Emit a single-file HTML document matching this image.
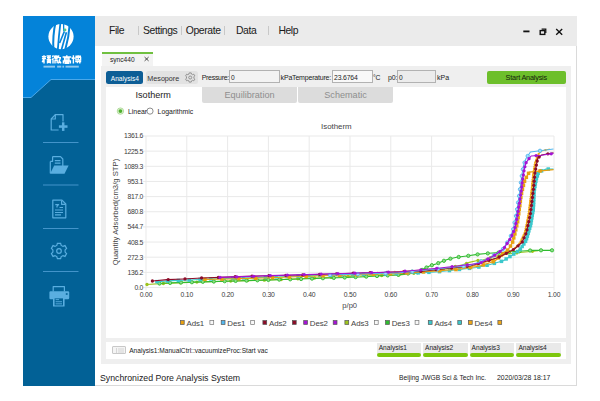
<!DOCTYPE html>
<html><head><meta charset="utf-8">
<style>
*{margin:0;padding:0;box-sizing:border-box}
html,body{width:600px;height:401px;background:#fff;overflow:hidden;font-family:"Liberation Sans",sans-serif;color:#222}
.a{position:absolute}
.menu{font-size:10.4px;letter-spacing:-0.4px;color:#1a1a1a;top:25.3px;line-height:12px}
.msep{position:absolute;width:1px;background:#c8c8c8;top:26px;height:9px}
.t7{font-size:6.4px;line-height:8px;white-space:nowrap}
.yl{position:absolute;left:110px;width:33px;text-align:right;font-size:6.8px;letter-spacing:-0.3px;line-height:9px;color:#3a3a3a}
.xl{position:absolute;top:290.3px;width:30px;text-align:center;font-size:6.8px;letter-spacing:-0.2px;line-height:9px;color:#3a3a3a}
.lm{position:absolute;top:320.3px;width:4.4px;height:4.4px;border:0.6px solid #666}
.lm.h{background:#f4f4f4;border-color:#888}
.lt{position:absolute;top:318.6px;font-size:7.9px;line-height:9px;color:#444;white-space:nowrap;letter-spacing:-0.1px}
.abox{position:absolute;top:343px;height:10.5px;background:#e9e9e9;font-size:6.6px;line-height:10px;padding-left:2px;color:#222}
.abar{position:absolute;top:353.3px;height:4.2px;background:#7cc60c;border-radius:2px}
</style></head><body>
<!-- window -->
<div class="a" style="left:95px;top:45px;width:482px;height:341px;background:#fff;border-right:1px solid #dadada;border-bottom:1px solid #dadada"></div>
<!-- sidebar -->
<div class="a" style="left:23px;top:16px;width:72px;height:370px;background:#026196"></div>
<svg class="a" style="left:0;top:0" width="600" height="401">
  <polygon points="23,16 95,16 95,79.5 51,79.5 31,97.5 23,97.5" fill="#0483d9"/>
  <polyline points="23,97.5 31,97.5 51,79.5 95,79.5" fill="none" stroke="#4aa8ea" stroke-width="1"/>
  <!-- logo circle -->
  <circle cx="61" cy="36.6" r="12.6" fill="#fff"/>
  <g fill="none" stroke="#0483d9" stroke-linecap="butt">
    <path d="M55.4,23 C53.8,30 52.8,38 53.4,50" stroke-width="2"/>
    <path d="M60.4,23 C59.4,31 58.6,39 57.8,50" stroke-width="1.8"/>
    <path d="M64.4,31.4 L59.6,43" stroke-width="1.6"/>
    <path d="M63.6,23 C63.6,27 63.7,29.5 63.8,31.2" stroke-width="1.3"/>
    <path d="M66.4,32.2 C64.8,38 63.2,43.5 61.4,50" stroke-width="1.7"/>
    <path d="M69.8,23.5 C69.2,33 67.8,41 65.2,50" stroke-width="2"/>
  </g>
  <circle cx="65" cy="29.9" r="1.4" fill="#50c888"/>
  <!-- chinese logo text approximations -->
  <g fill="none" stroke="#fff" stroke-width="1.4" stroke-linecap="butt">
    <path d="M44,55.2 V63.6 M41.9,58.6 H46 M42.4,56 L42.9,57.4 M45.6,56 L45.1,57.4 M43.6,59.4 L42.2,62.2"/>
    <path d="M46.6,56 H51 M47,57.8 H50.8 M46.6,59.6 H51.2 M48.8,55.2 V59.6 M47.5,60.4 V63.6 M47.5,61 H50.4 V63.6 M47.5,62.4 H50.4"/>
    <path d="M53.4,55.4 L52.4,57.2 M53.4,58 L52.2,60 M53,59.4 V63.6"/>
    <path d="M54.6,55.6 V57.6 H57.4 V55.6 M56,55.2 V57.6 M54.4,58.8 H57.6 M55,60 V63.4 M55,60.4 H57.2 V63.2"/>
    <path d="M58.8,55.4 L58.2,58 M58.4,57.6 H61 M60.4,57.8 L58.4,63.4 M58.8,59.6 L61,63.4"/>
    <path d="M66.8,55.2 V56.4 M62.6,57 H71.2 M64.6,58 H69 V60 H64.6 Z M63.4,63.6 V61 H70.4 V63.6 M65.2,62 H68.6 V63.2 H65.2 Z"/>
    <path d="M73.4,55.2 V63.6 M72.2,57.2 L72.4,59 M74.6,57.4 L74.4,58.6"/>
    <path d="M75.4,56.2 H81 M78.2,55.2 V60.6 M75.9,57.4 H80.6 V60 H75.9 Z M75.2,61.6 H81.2 M79.8,60.8 V63.6 M77,62.4 L77.6,63.2"/>
  </g>
  <g fill="#fff" opacity="0.55">
    <rect x="43.5" y="65.7" width="11.5" height="1.9"/>
    <rect x="57.1" y="65.7" width="4.2" height="1.9"/>
    <rect x="62.4" y="65.7" width="1.7" height="1.9"/>
    <rect x="65.5" y="65.7" width="13.3" height="1.9"/>
  </g>
  <!-- sidebar icons -->
  <g fill="none" stroke="#5aaee0" stroke-width="1.2" stroke-linejoin="round">
    <path d="M58.6,130 H51.2 V119 L55.3,114.6 H63 V121.6"/>
    <path d="M55.3,114.6 V119 H51.2"/>
    <path d="M52.6,156.6 H60.5 L62.8,159 V166"/>
    <path d="M50.3,161.4 H52.6 V156.6 M50.3,161.4 V173 H64.5"/>
    <path d="M54.8,160.6 H60.5 M54.8,163.2 H60.5"/>
    <path d="M52.8,200.2 H62 L65.8,204 V217.8 H52.8 Z"/>
    <path d="M61.6,200.4 V204.3 H65.6"/>
    <path d="M55,210 H63 M55,212.5 H63 M55,214.9 H61 M59.5,207.5 H63 M55.3,204.6 H58.6 L57,206.2 V207.4"/>
    <path d="M53.2,291.4 V286.6 H64.4 V291.4"/>
  </g>
  <g fill="#5aaee0">
    <rect x="58.9" y="125.3" width="8.6" height="2.5"/>
    <rect x="61.95" y="122.3" width="2.5" height="8.6"/>
    <polygon points="50.2,173.6 54.2,165.6 68.6,165.6 64.6,173.6"/>
    <rect x="49.4" y="291.2" width="19.8" height="8" rx="1.2"/>
    <rect x="53" y="296.3" width="11.6" height="10.3" rx="0.6"/>
  </g>
  <circle cx="59.5" cy="126.1" r="0" fill="#026196"/>
  <g fill="#026196">
    <rect x="54.6" y="298.4" width="8.4" height="7" />
    <rect x="65.8" y="293.2" width="1.8" height="1.6" fill="#026196"/>
  </g>
  <g fill="#5aaee0">
    <rect x="55.6" y="299.2" width="3.5" height="0.9"/>
    <rect x="55.6" y="301.3" width="6.4" height="0.9"/>
    <rect x="55.6" y="303.4" width="6.4" height="0.9"/>
  </g>
  <g fill="none" stroke="#5aaee0" stroke-width="1.2">
    <path d="M57.4,243.4 L60.6,243.4 L61.2,245.4 L63,246.4 L65,245.6 L66.6,248.4 L65.1,249.9 L65.1,252.1 L66.6,253.6 L65,256.4 L63,255.6 L61.2,256.6 L60.6,258.6 L57.4,258.6 L56.8,256.6 L55,255.6 L53,256.4 L51.4,253.6 L52.9,252.1 L52.9,249.9 L51.4,248.4 L53,245.6 L55,246.4 L56.8,245.4 Z"/>
    <circle cx="59" cy="251" r="2.3"/>
  </g>
  <g stroke="#4b9ad0" stroke-width="0.9">
    <line x1="43" y1="142.5" x2="78.5" y2="142.5"/>
    <line x1="43" y1="185" x2="78.5" y2="185"/>
    <line x1="43" y1="228.5" x2="78.5" y2="228.5"/>
    <line x1="43" y1="271.5" x2="78.5" y2="271.5"/>
  </g>
</svg>
<!-- menu bar -->
<div class="a" style="left:95px;top:16px;width:482px;height:29.5px;background:#ebebeb"></div>
<div class="a menu" style="left:109px">File</div>
<div class="msep" style="left:138px"></div>
<div class="a menu" style="left:143px">Settings</div>
<div class="msep" style="left:181px"></div>
<div class="a menu" style="left:185.8px">Operate</div>
<div class="msep" style="left:224px"></div>
<div class="a menu" style="left:236px">Data</div>
<div class="msep" style="left:267.5px"></div>
<div class="a menu" style="left:278.4px">Help</div>
<!-- window controls -->
<svg class="a" style="left:0;top:0" width="600" height="401">
  <rect x="523.3" y="30.5" width="6.2" height="1.8" fill="#111"/>
  <rect x="540.2" y="30.6" width="4.6" height="3.8" fill="none" stroke="#111" stroke-width="1.4"/>
  <path d="M541.6,29.2 H545.8 V33" fill="none" stroke="#111" stroke-width="1.2"/>
  <path d="M556.2,29 L562.2,34.8 M562.2,29 L556.2,34.8" stroke="#111" stroke-width="1.35"/>
</svg>
<!-- tab -->
<div class="a" style="left:102px;top:52px;width:51px;height:2px;background:#70c040"></div>
<div class="a" style="left:102px;top:54px;width:51px;height:12px;background:#f3f3f3"></div>
<div class="a" style="left:110px;top:56px;font-size:6.6px;line-height:8px;color:#222">sync440</div>
<svg class="a" style="left:0;top:0" width="600" height="401"><path d="M144.6,57.1 L148.6,60.9 M148.6,57.1 L144.6,60.9" stroke="#333" stroke-width="0.9"/></svg>
<!-- panel -->
<div class="a" style="left:101px;top:66px;width:469.6px;height:297.5px;background:#efefef"></div>
<!-- toolbar -->
<div class="a" style="left:105.8px;top:70.7px;width:37.5px;height:13.6px;background:#0d5e96;border-radius:2.5px;color:#fff;font-size:6.6px;line-height:15.2px;padding-left:5px">Analysis4</div>
<div class="a" style="left:146.3px;top:70.7px;width:51.7px;height:13.4px;background:#e2e2e2;border-radius:2.5px;color:#333;font-size:7.2px;line-height:15.4px;padding-left:1px">Mesopore</div>
<svg class="a" style="left:0;top:0" width="600" height="401"><g fill="none" stroke="#8a8a8a" stroke-width="0.9">
<path d="M189.2,72.9 L191.2,72.9 L191.5,74.1 L192.6,74.7 L193.8,74.2 L194.8,75.9 L193.9,76.8 L193.9,78.2 L194.8,79.1 L193.8,80.8 L192.6,80.3 L191.5,80.9 L191.2,82.1 L189.2,82.1 L188.9,80.9 L187.8,80.3 L186.6,80.8 L185.6,79.1 L186.5,78.2 L186.5,76.8 L185.6,75.9 L186.6,74.2 L187.8,74.7 L188.9,74.1 Z"/>
<circle cx="190.2" cy="77.5" r="1.5"/></g></svg>
<div class="a" style="left:201.7px;top:73.8px;font-size:7px;letter-spacing:-0.3px;line-height:8px;color:#222">Pressure:</div>
<div class="a" style="left:229px;top:70.4px;width:51.4px;height:12.6px;background:#f3f3f3;border:1px solid #b2b2b2;font-size:6.6px;line-height:13.2px;padding-left:1px">0</div>
<div class="a" style="left:280.6px;top:73.8px;font-size:7px;letter-spacing:-0.19px;line-height:8px;color:#222">kPaTemperature:</div>
<div class="a" style="left:332px;top:70.4px;width:40.6px;height:12.6px;background:#f8f8f8;border:1px solid #b2b2b2;font-size:6.8px;letter-spacing:-0.15px;line-height:13.2px;padding-left:1px">23.6764</div>
<div class="a" style="left:373px;top:74.4px;font-size:6.8px;letter-spacing:-0.3px;line-height:8px;color:#222">&#176;C</div>
<div class="a" style="left:388px;top:74.2px;font-size:7px;letter-spacing:-0.2px;line-height:8px;color:#222">p0:</div>
<div class="a" style="left:397px;top:70.4px;width:39px;height:12.6px;background:#ececec;border:1px solid #b2b2b2;font-size:6.6px;line-height:13.2px;padding-left:1px">0</div>
<div class="a" style="left:437px;top:74.2px;font-size:7px;line-height:8px;color:#222">kPa</div>
<div class="a" style="left:486.6px;top:70.9px;width:79.4px;height:12.8px;background:#6dbf2b;border-radius:2px;color:#15220c;font-size:7.3px;letter-spacing:-0.2px;line-height:14.6px;text-align:center">Start Analysis</div>
<!-- content white -->
<div class="a" style="left:106px;top:87px;width:460px;height:251px;background:#fff"></div>
<!-- iso tabs -->
<div class="a" style="left:135.5px;top:89.5px;font-size:9.1px;line-height:11px;color:#222">Isotherm</div>
<div class="a" style="left:202px;top:87px;width:95px;height:15.5px;background:#dcdcdc;border-radius:0 0 2px 2px;text-align:center;font-size:9.1px;line-height:16.6px;color:#8e8e8e">Equilibration</div>
<div class="a" style="left:298px;top:87px;width:95px;height:15.5px;background:#dcdcdc;border-radius:0 0 2px 2px;text-align:center;font-size:9.1px;line-height:16.6px;color:#8e8e8e">Schematic</div>
<!-- radios -->
<svg class="a" style="left:0;top:0" width="600" height="401">
  <circle cx="120.4" cy="111.1" r="3.2" fill="#dff2d4" stroke="#a6d68e" stroke-width="0.8"/>
  <circle cx="120.4" cy="111.1" r="1.9" fill="#4fb02e"/>
  <circle cx="150" cy="111.1" r="3.1" fill="#fff" stroke="#6a6a6a" stroke-width="0.75"/>
</svg>
<div class="a" style="left:128px;top:107.5px;font-size:6.9px;line-height:8px;color:#222">Linear</div>
<div class="a" style="left:157.6px;top:107.5px;font-size:6.9px;line-height:8px;color:#222">Logarithmic</div>
<!-- chart -->
<div class="a" style="left:321px;top:122px;font-size:7.9px;line-height:9px;color:#444">Isotherm</div>
<svg class="a" style="left:0;top:0" width="600" height="401">
<line x1="143.0" y1="136.00" x2="554.0" y2="136.00" stroke="#e9e9e9" stroke-width="1"/>
<line x1="143.0" y1="151.15" x2="554.0" y2="151.15" stroke="#e9e9e9" stroke-width="1"/>
<line x1="143.0" y1="166.30" x2="554.0" y2="166.30" stroke="#e9e9e9" stroke-width="1"/>
<line x1="143.0" y1="181.45" x2="554.0" y2="181.45" stroke="#e9e9e9" stroke-width="1"/>
<line x1="143.0" y1="196.60" x2="554.0" y2="196.60" stroke="#e9e9e9" stroke-width="1"/>
<line x1="143.0" y1="211.75" x2="554.0" y2="211.75" stroke="#e9e9e9" stroke-width="1"/>
<line x1="143.0" y1="226.90" x2="554.0" y2="226.90" stroke="#e9e9e9" stroke-width="1"/>
<line x1="143.0" y1="242.05" x2="554.0" y2="242.05" stroke="#e9e9e9" stroke-width="1"/>
<line x1="143.0" y1="257.20" x2="554.0" y2="257.20" stroke="#e9e9e9" stroke-width="1"/>
<line x1="143.0" y1="272.35" x2="554.0" y2="272.35" stroke="#e9e9e9" stroke-width="1"/>
<line x1="143.0" y1="287.50" x2="554.0" y2="287.50" stroke="#e9e9e9" stroke-width="1"/>
<line x1="146.00" y1="136.0" x2="146.00" y2="290.5" stroke="#e9e9e9" stroke-width="1"/>
<line x1="186.80" y1="136.0" x2="186.80" y2="290.5" stroke="#e9e9e9" stroke-width="1"/>
<line x1="227.60" y1="136.0" x2="227.60" y2="290.5" stroke="#e9e9e9" stroke-width="1"/>
<line x1="268.40" y1="136.0" x2="268.40" y2="290.5" stroke="#e9e9e9" stroke-width="1"/>
<line x1="309.20" y1="136.0" x2="309.20" y2="290.5" stroke="#e9e9e9" stroke-width="1"/>
<line x1="350.00" y1="136.0" x2="350.00" y2="290.5" stroke="#e9e9e9" stroke-width="1"/>
<line x1="390.80" y1="136.0" x2="390.80" y2="290.5" stroke="#e9e9e9" stroke-width="1"/>
<line x1="431.60" y1="136.0" x2="431.60" y2="290.5" stroke="#e9e9e9" stroke-width="1"/>
<line x1="472.40" y1="136.0" x2="472.40" y2="290.5" stroke="#e9e9e9" stroke-width="1"/>
<line x1="513.20" y1="136.0" x2="513.20" y2="290.5" stroke="#e9e9e9" stroke-width="1"/>
<line x1="554.00" y1="136.0" x2="554.00" y2="290.5" stroke="#e9e9e9" stroke-width="1"/>
<path d="M147.0,284.5 L160.0,283.6 L200.0,282.0 L270.0,280.0 L360.0,276.0 L400.0,275.0 L440.0,270.0 L462.7,264.7 L469.3,262.4 L476.3,260.7 L483.3,259.7 L500.0,255.0 L520.0,252.5 L538.3,250.8" fill="none" stroke="#9dc41c" stroke-width="1.15" stroke-linejoin="round"/>
<circle cx="147.0" cy="284.5" r="1.65" fill="#9dc41c"/>
<circle cx="163.4" cy="283.5" r="1.65" fill="#9dc41c"/>
<circle cx="180.2" cy="282.8" r="1.65" fill="#9dc41c"/>
<circle cx="196.9" cy="282.1" r="1.65" fill="#9dc41c"/>
<circle cx="213.8" cy="281.6" r="1.65" fill="#9dc41c"/>
<circle cx="230.7" cy="281.1" r="1.65" fill="#9dc41c"/>
<circle cx="247.6" cy="280.6" r="1.65" fill="#9dc41c"/>
<circle cx="264.4" cy="280.2" r="1.65" fill="#9dc41c"/>
<circle cx="281.2" cy="279.5" r="1.65" fill="#9dc41c"/>
<circle cx="297.9" cy="278.8" r="1.65" fill="#9dc41c"/>
<circle cx="314.6" cy="278.0" r="1.65" fill="#9dc41c"/>
<circle cx="331.3" cy="277.3" r="1.65" fill="#9dc41c"/>
<circle cx="348.1" cy="276.5" r="1.65" fill="#9dc41c"/>
<circle cx="364.8" cy="275.9" r="1.65" fill="#9dc41c"/>
<circle cx="381.7" cy="275.5" r="1.65" fill="#9dc41c"/>
<circle cx="398.6" cy="275.0" r="1.65" fill="#9dc41c"/>
<circle cx="413.8" cy="273.3" r="1.65" fill="#9dc41c"/>
<circle cx="428.9" cy="271.4" r="1.65" fill="#9dc41c"/>
<circle cx="443.2" cy="269.3" r="1.65" fill="#9dc41c"/>
<circle cx="455.3" cy="266.4" r="1.65" fill="#9dc41c"/>
<circle cx="466.5" cy="263.4" r="1.65" fill="#9dc41c"/>
<circle cx="478.0" cy="260.5" r="1.65" fill="#9dc41c"/>
<circle cx="490.3" cy="257.7" r="1.65" fill="#9dc41c"/>
<circle cx="501.7" cy="254.8" r="1.65" fill="#9dc41c"/>
<circle cx="516.8" cy="252.9" r="1.65" fill="#9dc41c"/>
<circle cx="532.4" cy="251.3" r="1.65" fill="#9dc41c"/>
<path d="M159.5,283.5 L166.0,283.0 L184.0,282.4 L211.0,281.6 L234.0,281.0 L253.0,280.4 L300.0,279.0 L360.0,277.0 L400.0,274.7 L418.7,272.0 L424.7,268.3 L430.7,265.6 L436.7,263.7 L442.7,261.3 L448.0,259.3 L456.7,257.3 L466.7,256.0 L477.3,254.4 L489.0,253.3 L533.3,250.3 L552.8,250.3" fill="none" stroke="#2fbb2f" stroke-width="1.15" stroke-linejoin="round"/>
<circle cx="159.5" cy="283.5" r="1.65" fill="#8fdc8a" stroke="#2fbb2f" stroke-width="0.9"/>
<circle cx="170.1" cy="282.9" r="1.65" fill="#8fdc8a" stroke="#2fbb2f" stroke-width="0.9"/>
<circle cx="181.0" cy="282.5" r="1.65" fill="#8fdc8a" stroke="#2fbb2f" stroke-width="0.9"/>
<circle cx="191.9" cy="282.2" r="1.65" fill="#8fdc8a" stroke="#2fbb2f" stroke-width="0.9"/>
<circle cx="202.8" cy="281.8" r="1.65" fill="#8fdc8a" stroke="#2fbb2f" stroke-width="0.9"/>
<circle cx="213.8" cy="281.5" r="1.65" fill="#8fdc8a" stroke="#2fbb2f" stroke-width="0.9"/>
<circle cx="224.7" cy="281.2" r="1.65" fill="#8fdc8a" stroke="#2fbb2f" stroke-width="0.9"/>
<circle cx="235.6" cy="280.9" r="1.65" fill="#8fdc8a" stroke="#2fbb2f" stroke-width="0.9"/>
<circle cx="246.5" cy="280.6" r="1.65" fill="#8fdc8a" stroke="#2fbb2f" stroke-width="0.9"/>
<circle cx="257.4" cy="280.3" r="1.65" fill="#8fdc8a" stroke="#2fbb2f" stroke-width="0.9"/>
<circle cx="268.4" cy="279.9" r="1.65" fill="#8fdc8a" stroke="#2fbb2f" stroke-width="0.9"/>
<circle cx="279.3" cy="279.6" r="1.65" fill="#8fdc8a" stroke="#2fbb2f" stroke-width="0.9"/>
<circle cx="290.2" cy="279.3" r="1.65" fill="#8fdc8a" stroke="#2fbb2f" stroke-width="0.9"/>
<circle cx="301.1" cy="279.0" r="1.65" fill="#8fdc8a" stroke="#2fbb2f" stroke-width="0.9"/>
<circle cx="312.0" cy="278.6" r="1.65" fill="#8fdc8a" stroke="#2fbb2f" stroke-width="0.9"/>
<circle cx="322.9" cy="278.2" r="1.65" fill="#8fdc8a" stroke="#2fbb2f" stroke-width="0.9"/>
<circle cx="333.8" cy="277.9" r="1.65" fill="#8fdc8a" stroke="#2fbb2f" stroke-width="0.9"/>
<circle cx="344.7" cy="277.5" r="1.65" fill="#8fdc8a" stroke="#2fbb2f" stroke-width="0.9"/>
<circle cx="355.6" cy="277.1" r="1.65" fill="#8fdc8a" stroke="#2fbb2f" stroke-width="0.9"/>
<circle cx="366.3" cy="276.6" r="1.65" fill="#8fdc8a" stroke="#2fbb2f" stroke-width="0.9"/>
<circle cx="377.0" cy="276.0" r="1.65" fill="#8fdc8a" stroke="#2fbb2f" stroke-width="0.9"/>
<circle cx="387.7" cy="275.4" r="1.65" fill="#8fdc8a" stroke="#2fbb2f" stroke-width="0.9"/>
<circle cx="398.4" cy="274.8" r="1.65" fill="#8fdc8a" stroke="#2fbb2f" stroke-width="0.9"/>
<circle cx="408.0" cy="273.5" r="1.65" fill="#8fdc8a" stroke="#2fbb2f" stroke-width="0.9"/>
<circle cx="417.4" cy="272.2" r="1.65" fill="#8fdc8a" stroke="#2fbb2f" stroke-width="0.9"/>
<circle cx="422.1" cy="269.9" r="1.65" fill="#8fdc8a" stroke="#2fbb2f" stroke-width="0.9"/>
<circle cx="426.5" cy="267.5" r="1.65" fill="#8fdc8a" stroke="#2fbb2f" stroke-width="0.9"/>
<circle cx="431.9" cy="265.2" r="1.65" fill="#8fdc8a" stroke="#2fbb2f" stroke-width="0.9"/>
<circle cx="438.3" cy="263.1" r="1.65" fill="#8fdc8a" stroke="#2fbb2f" stroke-width="0.9"/>
<circle cx="443.9" cy="260.8" r="1.65" fill="#8fdc8a" stroke="#2fbb2f" stroke-width="0.9"/>
<circle cx="450.4" cy="258.7" r="1.65" fill="#8fdc8a" stroke="#2fbb2f" stroke-width="0.9"/>
<circle cx="458.7" cy="257.0" r="1.65" fill="#8fdc8a" stroke="#2fbb2f" stroke-width="0.9"/>
<circle cx="468.3" cy="255.8" r="1.65" fill="#8fdc8a" stroke="#2fbb2f" stroke-width="0.9"/>
<circle cx="477.6" cy="254.4" r="1.65" fill="#8fdc8a" stroke="#2fbb2f" stroke-width="0.9"/>
<circle cx="487.8" cy="253.4" r="1.65" fill="#8fdc8a" stroke="#2fbb2f" stroke-width="0.9"/>
<circle cx="498.4" cy="252.7" r="1.65" fill="#8fdc8a" stroke="#2fbb2f" stroke-width="0.9"/>
<circle cx="509.0" cy="251.9" r="1.65" fill="#8fdc8a" stroke="#2fbb2f" stroke-width="0.9"/>
<circle cx="519.5" cy="251.2" r="1.65" fill="#8fdc8a" stroke="#2fbb2f" stroke-width="0.9"/>
<circle cx="530.1" cy="250.5" r="1.65" fill="#8fdc8a" stroke="#2fbb2f" stroke-width="0.9"/>
<circle cx="541.0" cy="250.3" r="1.65" fill="#8fdc8a" stroke="#2fbb2f" stroke-width="0.9"/>
<circle cx="552.0" cy="250.3" r="1.65" fill="#8fdc8a" stroke="#2fbb2f" stroke-width="0.9"/>
<path d="M157.0,281.6 L173.0,280.6 L189.6,280.0 L209.0,279.0 L260.0,277.5 L330.0,275.0 L400.0,273.5 L424.0,272.7 L438.7,271.7 L466.0,268.7 L476.7,267.5 L488.3,265.0 L503.3,260.8 L515.0,253.3 L519.9,249.8 L525.9,240.8 L530.4,225.9 L533.3,209.4 L534.1,190.8 L536.3,178.9 L538.6,172.1 L546.0,169.1 L553.5,169.1" fill="none" stroke="#3cc8cc" stroke-width="1.15" stroke-linejoin="round"/>
<rect x="155.2" y="279.9" width="3.5" height="3.5" fill="#3cc8cc"/>
<rect x="165.9" y="279.2" width="3.5" height="3.5" fill="#3cc8cc"/>
<rect x="176.6" y="278.7" width="3.5" height="3.5" fill="#3cc8cc"/>
<rect x="187.5" y="278.3" width="3.5" height="3.5" fill="#3cc8cc"/>
<rect x="198.3" y="277.7" width="3.5" height="3.5" fill="#3cc8cc"/>
<rect x="209.1" y="277.2" width="3.5" height="3.5" fill="#3cc8cc"/>
<rect x="220.0" y="276.9" width="3.5" height="3.5" fill="#3cc8cc"/>
<rect x="230.9" y="276.6" width="3.5" height="3.5" fill="#3cc8cc"/>
<rect x="241.8" y="276.2" width="3.5" height="3.5" fill="#3cc8cc"/>
<rect x="252.7" y="275.9" width="3.5" height="3.5" fill="#3cc8cc"/>
<rect x="263.6" y="275.6" width="3.5" height="3.5" fill="#3cc8cc"/>
<rect x="274.5" y="275.2" width="3.5" height="3.5" fill="#3cc8cc"/>
<rect x="285.4" y="274.8" width="3.5" height="3.5" fill="#3cc8cc"/>
<rect x="296.3" y="274.4" width="3.5" height="3.5" fill="#3cc8cc"/>
<rect x="307.1" y="274.0" width="3.5" height="3.5" fill="#3cc8cc"/>
<rect x="318.0" y="273.6" width="3.5" height="3.5" fill="#3cc8cc"/>
<rect x="328.9" y="273.2" width="3.5" height="3.5" fill="#3cc8cc"/>
<rect x="339.9" y="273.0" width="3.5" height="3.5" fill="#3cc8cc"/>
<rect x="350.8" y="272.8" width="3.5" height="3.5" fill="#3cc8cc"/>
<rect x="361.8" y="272.5" width="3.5" height="3.5" fill="#3cc8cc"/>
<rect x="372.7" y="272.3" width="3.5" height="3.5" fill="#3cc8cc"/>
<rect x="383.7" y="272.1" width="3.5" height="3.5" fill="#3cc8cc"/>
<rect x="394.6" y="271.8" width="3.5" height="3.5" fill="#3cc8cc"/>
<rect x="405.5" y="271.5" width="3.5" height="3.5" fill="#3cc8cc"/>
<rect x="416.4" y="271.1" width="3.5" height="3.5" fill="#3cc8cc"/>
<rect x="427.2" y="270.6" width="3.5" height="3.5" fill="#3cc8cc"/>
<rect x="437.7" y="269.9" width="3.5" height="3.5" fill="#3cc8cc"/>
<rect x="447.7" y="268.8" width="3.5" height="3.5" fill="#3cc8cc"/>
<rect x="457.7" y="267.7" width="3.5" height="3.5" fill="#3cc8cc"/>
<rect x="467.7" y="266.6" width="3.5" height="3.5" fill="#3cc8cc"/>
<rect x="477.1" y="265.3" width="3.5" height="3.5" fill="#3cc8cc"/>
<rect x="485.3" y="263.5" width="3.5" height="3.5" fill="#3cc8cc"/>
<rect x="492.6" y="261.6" width="3.5" height="3.5" fill="#3cc8cc"/>
<rect x="499.7" y="259.6" width="3.5" height="3.5" fill="#3cc8cc"/>
<rect x="504.4" y="257.2" width="3.5" height="3.5" fill="#3cc8cc"/>
<rect x="508.2" y="254.8" width="3.5" height="3.5" fill="#3cc8cc"/>
<rect x="512.0" y="252.3" width="3.5" height="3.5" fill="#3cc8cc"/>
<rect x="515.6" y="249.8" width="3.5" height="3.5" fill="#3cc8cc"/>
<rect x="518.6" y="247.3" width="3.5" height="3.5" fill="#3cc8cc"/>
<rect x="520.4" y="244.7" width="3.5" height="3.5" fill="#3cc8cc"/>
<rect x="522.1" y="242.2" width="3.5" height="3.5" fill="#3cc8cc"/>
<rect x="523.8" y="239.6" width="3.5" height="3.5" fill="#3cc8cc"/>
<rect x="524.8" y="237.0" width="3.5" height="3.5" fill="#3cc8cc"/>
<rect x="525.6" y="234.4" width="3.5" height="3.5" fill="#3cc8cc"/>
<rect x="526.4" y="231.7" width="3.5" height="3.5" fill="#3cc8cc"/>
<rect x="527.1" y="229.1" width="3.5" height="3.5" fill="#3cc8cc"/>
<rect x="527.9" y="226.5" width="3.5" height="3.5" fill="#3cc8cc"/>
<rect x="528.7" y="223.9" width="3.5" height="3.5" fill="#3cc8cc"/>
<rect x="529.2" y="221.3" width="3.5" height="3.5" fill="#3cc8cc"/>
<rect x="529.6" y="218.7" width="3.5" height="3.5" fill="#3cc8cc"/>
<rect x="530.1" y="216.1" width="3.5" height="3.5" fill="#3cc8cc"/>
<rect x="530.5" y="213.4" width="3.5" height="3.5" fill="#3cc8cc"/>
<rect x="531.0" y="210.8" width="3.5" height="3.5" fill="#3cc8cc"/>
<rect x="531.5" y="208.2" width="3.5" height="3.5" fill="#3cc8cc"/>
<rect x="531.6" y="205.6" width="3.5" height="3.5" fill="#3cc8cc"/>
<rect x="531.8" y="203.0" width="3.5" height="3.5" fill="#3cc8cc"/>
<rect x="531.9" y="200.3" width="3.5" height="3.5" fill="#3cc8cc"/>
<rect x="532.0" y="197.7" width="3.5" height="3.5" fill="#3cc8cc"/>
<rect x="532.1" y="195.1" width="3.5" height="3.5" fill="#3cc8cc"/>
<rect x="532.2" y="192.5" width="3.5" height="3.5" fill="#3cc8cc"/>
<rect x="532.3" y="189.9" width="3.5" height="3.5" fill="#3cc8cc"/>
<rect x="532.7" y="187.3" width="3.5" height="3.5" fill="#3cc8cc"/>
<rect x="533.2" y="184.6" width="3.5" height="3.5" fill="#3cc8cc"/>
<rect x="533.6" y="182.0" width="3.5" height="3.5" fill="#3cc8cc"/>
<rect x="534.1" y="179.4" width="3.5" height="3.5" fill="#3cc8cc"/>
<rect x="534.7" y="176.8" width="3.5" height="3.5" fill="#3cc8cc"/>
<rect x="535.6" y="174.2" width="3.5" height="3.5" fill="#3cc8cc"/>
<rect x="536.4" y="171.6" width="3.5" height="3.5" fill="#3cc8cc"/>
<rect x="539.8" y="169.1" width="3.5" height="3.5" fill="#3cc8cc"/>
<rect x="546.5" y="167.3" width="3.5" height="3.5" fill="#3cc8cc"/>
<path d="M205.0,279.4 L228.0,279.0 L263.0,278.0 L330.0,275.5 L400.0,273.5 L432.7,271.3 L458.7,269.3 L480.0,266.0 L495.0,261.0 L503.3,253.3 L508.7,249.0 L512.5,242.5 L514.7,234.8 L517.7,221.4 L519.9,205.0 L521.1,195.3 L523.2,186.3 L525.1,179.6 L529.2,172.1 L553.5,169.6" fill="none" stroke="#e8a010" stroke-width="1.15" stroke-linejoin="round"/>
<rect x="203.2" y="277.6" width="3.5" height="3.5" fill="#e8a010"/>
<rect x="220.2" y="277.4" width="3.5" height="3.5" fill="#e8a010"/>
<rect x="237.1" y="276.9" width="3.5" height="3.5" fill="#e8a010"/>
<rect x="254.0" y="276.5" width="3.5" height="3.5" fill="#e8a010"/>
<rect x="270.8" y="275.9" width="3.5" height="3.5" fill="#e8a010"/>
<rect x="287.6" y="275.3" width="3.5" height="3.5" fill="#e8a010"/>
<rect x="304.4" y="274.6" width="3.5" height="3.5" fill="#e8a010"/>
<rect x="321.2" y="274.0" width="3.5" height="3.5" fill="#e8a010"/>
<rect x="338.0" y="273.5" width="3.5" height="3.5" fill="#e8a010"/>
<rect x="354.9" y="273.0" width="3.5" height="3.5" fill="#e8a010"/>
<rect x="371.8" y="272.5" width="3.5" height="3.5" fill="#e8a010"/>
<rect x="388.7" y="272.0" width="3.5" height="3.5" fill="#e8a010"/>
<rect x="405.3" y="271.3" width="3.5" height="3.5" fill="#e8a010"/>
<rect x="421.7" y="270.2" width="3.5" height="3.5" fill="#e8a010"/>
<rect x="438.0" y="269.0" width="3.5" height="3.5" fill="#e8a010"/>
<rect x="454.2" y="267.8" width="3.5" height="3.5" fill="#e8a010"/>
<rect x="468.7" y="265.7" width="3.5" height="3.5" fill="#e8a010"/>
<rect x="481.5" y="263.2" width="3.5" height="3.5" fill="#e8a010"/>
<rect x="491.4" y="259.9" width="3.5" height="3.5" fill="#e8a010"/>
<rect x="496.7" y="256.1" width="3.5" height="3.5" fill="#e8a010"/>
<rect x="500.9" y="252.1" width="3.5" height="3.5" fill="#e8a010"/>
<rect x="505.7" y="248.3" width="3.5" height="3.5" fill="#e8a010"/>
<rect x="508.7" y="244.3" width="3.5" height="3.5" fill="#e8a010"/>
<rect x="510.9" y="240.3" width="3.5" height="3.5" fill="#e8a010"/>
<rect x="512.0" y="236.2" width="3.5" height="3.5" fill="#e8a010"/>
<rect x="513.1" y="232.2" width="3.5" height="3.5" fill="#e8a010"/>
<rect x="514.0" y="228.1" width="3.5" height="3.5" fill="#e8a010"/>
<rect x="515.0" y="224.1" width="3.5" height="3.5" fill="#e8a010"/>
<rect x="515.9" y="220.1" width="3.5" height="3.5" fill="#e8a010"/>
<rect x="516.4" y="216.0" width="3.5" height="3.5" fill="#e8a010"/>
<rect x="517.0" y="212.0" width="3.5" height="3.5" fill="#e8a010"/>
<rect x="517.5" y="207.9" width="3.5" height="3.5" fill="#e8a010"/>
<rect x="518.1" y="203.9" width="3.5" height="3.5" fill="#e8a010"/>
<rect x="518.6" y="199.8" width="3.5" height="3.5" fill="#e8a010"/>
<rect x="519.1" y="195.8" width="3.5" height="3.5" fill="#e8a010"/>
<rect x="519.8" y="191.7" width="3.5" height="3.5" fill="#e8a010"/>
<rect x="520.7" y="187.7" width="3.5" height="3.5" fill="#e8a010"/>
<rect x="521.7" y="183.7" width="3.5" height="3.5" fill="#e8a010"/>
<rect x="522.8" y="179.6" width="3.5" height="3.5" fill="#e8a010"/>
<rect x="524.6" y="175.6" width="3.5" height="3.5" fill="#e8a010"/>
<rect x="526.8" y="171.6" width="3.5" height="3.5" fill="#e8a010"/>
<rect x="538.3" y="169.2" width="3.5" height="3.5" fill="#e8a010"/>
<path d="M360.0,274.0 L470.0,267.0 L497.0,258.5 L513.0,250.0 L520.0,243.0 L525.0,232.0 L528.5,214.0 L531.5,190.0 L533.0,175.0 L535.0,163.0 L537.8,155.0 L540.8,151.2 L549.8,149.0" fill="none" stroke="#f0a818" stroke-width="1.15" stroke-linejoin="round"/>
<circle cx="360.0" cy="274.0" r="1.1" fill="#f0a818"/>
<circle cx="368.7" cy="273.4" r="1.1" fill="#f0a818"/>
<circle cx="377.4" cy="272.9" r="1.1" fill="#f0a818"/>
<circle cx="386.1" cy="272.3" r="1.1" fill="#f0a818"/>
<circle cx="394.8" cy="271.8" r="1.1" fill="#f0a818"/>
<circle cx="403.5" cy="271.2" r="1.1" fill="#f0a818"/>
<circle cx="412.2" cy="270.7" r="1.1" fill="#f0a818"/>
<circle cx="420.9" cy="270.1" r="1.1" fill="#f0a818"/>
<circle cx="429.6" cy="269.6" r="1.1" fill="#f0a818"/>
<circle cx="438.3" cy="269.0" r="1.1" fill="#f0a818"/>
<circle cx="446.9" cy="268.5" r="1.1" fill="#f0a818"/>
<circle cx="455.6" cy="267.9" r="1.1" fill="#f0a818"/>
<circle cx="464.3" cy="267.4" r="1.1" fill="#f0a818"/>
<circle cx="471.9" cy="266.4" r="1.1" fill="#f0a818"/>
<circle cx="477.3" cy="264.7" r="1.1" fill="#f0a818"/>
<circle cx="482.8" cy="263.0" r="1.1" fill="#f0a818"/>
<circle cx="488.2" cy="261.3" r="1.1" fill="#f0a818"/>
<circle cx="493.6" cy="259.6" r="1.1" fill="#f0a818"/>
<circle cx="498.4" cy="257.8" r="1.1" fill="#f0a818"/>
<circle cx="502.1" cy="255.8" r="1.1" fill="#f0a818"/>
<circle cx="505.7" cy="253.9" r="1.1" fill="#f0a818"/>
<circle cx="509.4" cy="251.9" r="1.1" fill="#f0a818"/>
<circle cx="513.1" cy="249.9" r="1.1" fill="#f0a818"/>
<circle cx="515.1" cy="247.9" r="1.1" fill="#f0a818"/>
<circle cx="517.2" cy="245.8" r="1.1" fill="#f0a818"/>
<circle cx="519.3" cy="243.7" r="1.1" fill="#f0a818"/>
<circle cx="520.6" cy="241.6" r="1.1" fill="#f0a818"/>
<circle cx="521.6" cy="239.4" r="1.1" fill="#f0a818"/>
<circle cx="522.6" cy="237.3" r="1.1" fill="#f0a818"/>
<circle cx="523.6" cy="235.2" r="1.1" fill="#f0a818"/>
<circle cx="524.5" cy="233.0" r="1.1" fill="#f0a818"/>
<circle cx="525.2" cy="230.9" r="1.1" fill="#f0a818"/>
<circle cx="525.6" cy="228.8" r="1.1" fill="#f0a818"/>
<circle cx="526.0" cy="226.6" r="1.1" fill="#f0a818"/>
<circle cx="526.5" cy="224.5" r="1.1" fill="#f0a818"/>
<circle cx="526.9" cy="222.4" r="1.1" fill="#f0a818"/>
<circle cx="527.3" cy="220.2" r="1.1" fill="#f0a818"/>
<circle cx="527.7" cy="218.1" r="1.1" fill="#f0a818"/>
<circle cx="528.1" cy="215.9" r="1.1" fill="#f0a818"/>
<circle cx="528.5" cy="213.8" r="1.1" fill="#f0a818"/>
<circle cx="528.8" cy="211.6" r="1.1" fill="#f0a818"/>
<circle cx="529.1" cy="209.5" r="1.1" fill="#f0a818"/>
<circle cx="529.3" cy="207.4" r="1.1" fill="#f0a818"/>
<circle cx="529.6" cy="205.2" r="1.1" fill="#f0a818"/>
<circle cx="529.9" cy="203.1" r="1.1" fill="#f0a818"/>
<circle cx="530.1" cy="200.9" r="1.1" fill="#f0a818"/>
<circle cx="530.4" cy="198.8" r="1.1" fill="#f0a818"/>
<circle cx="530.7" cy="196.7" r="1.1" fill="#f0a818"/>
<circle cx="530.9" cy="194.5" r="1.1" fill="#f0a818"/>
<circle cx="531.2" cy="192.4" r="1.1" fill="#f0a818"/>
<circle cx="531.5" cy="190.2" r="1.1" fill="#f0a818"/>
<circle cx="531.7" cy="188.1" r="1.1" fill="#f0a818"/>
<circle cx="531.9" cy="185.9" r="1.1" fill="#f0a818"/>
<circle cx="532.1" cy="183.8" r="1.1" fill="#f0a818"/>
<circle cx="532.3" cy="181.7" r="1.1" fill="#f0a818"/>
<circle cx="532.5" cy="179.5" r="1.1" fill="#f0a818"/>
<circle cx="532.8" cy="177.4" r="1.1" fill="#f0a818"/>
<circle cx="533.0" cy="175.2" r="1.1" fill="#f0a818"/>
<circle cx="533.3" cy="173.1" r="1.1" fill="#f0a818"/>
<circle cx="533.7" cy="171.0" r="1.1" fill="#f0a818"/>
<circle cx="534.0" cy="168.8" r="1.1" fill="#f0a818"/>
<circle cx="534.4" cy="166.7" r="1.1" fill="#f0a818"/>
<circle cx="534.7" cy="164.5" r="1.1" fill="#f0a818"/>
<circle cx="535.2" cy="162.4" r="1.1" fill="#f0a818"/>
<circle cx="536.0" cy="160.3" r="1.1" fill="#f0a818"/>
<circle cx="536.7" cy="158.1" r="1.1" fill="#f0a818"/>
<circle cx="537.5" cy="156.0" r="1.1" fill="#f0a818"/>
<circle cx="538.7" cy="153.9" r="1.1" fill="#f0a818"/>
<circle cx="540.4" cy="151.8" r="1.1" fill="#f0a818"/>
<circle cx="545.4" cy="150.1" r="1.1" fill="#f0a818"/>
<path d="M152.4,281.0 L167.0,279.6 L183.6,279.0 L201.6,278.0 L239.0,276.6 L257.0,276.0 L300.0,275.0 L360.0,273.0 L420.0,271.5 L470.0,266.0 L498.3,257.5 L514.2,249.2 L522.1,242.3 L526.6,231.9 L530.4,213.9 L533.3,190.0 L534.8,174.4 L536.3,165.4 L537.8,158.0 L541.6,155.0 L553.5,152.7" fill="none" stroke="#8c0c28" stroke-width="1.15" stroke-linejoin="round"/>
<circle cx="152.4" cy="281.0" r="1.65" fill="#8c0c28"/>
<circle cx="168.2" cy="279.6" r="1.65" fill="#8c0c28"/>
<circle cx="185.0" cy="278.9" r="1.65" fill="#8c0c28"/>
<circle cx="201.6" cy="278.0" r="1.65" fill="#8c0c28"/>
<circle cx="218.4" cy="277.4" r="1.65" fill="#8c0c28"/>
<circle cx="235.2" cy="276.7" r="1.65" fill="#8c0c28"/>
<circle cx="252.0" cy="276.2" r="1.65" fill="#8c0c28"/>
<circle cx="268.9" cy="275.7" r="1.65" fill="#8c0c28"/>
<circle cx="285.8" cy="275.3" r="1.65" fill="#8c0c28"/>
<circle cx="302.7" cy="274.9" r="1.65" fill="#8c0c28"/>
<circle cx="319.6" cy="274.3" r="1.65" fill="#8c0c28"/>
<circle cx="336.4" cy="273.8" r="1.65" fill="#8c0c28"/>
<circle cx="353.2" cy="273.2" r="1.65" fill="#8c0c28"/>
<circle cx="370.1" cy="272.7" r="1.65" fill="#8c0c28"/>
<circle cx="387.0" cy="272.3" r="1.65" fill="#8c0c28"/>
<circle cx="403.9" cy="271.9" r="1.65" fill="#8c0c28"/>
<circle cx="420.8" cy="271.4" r="1.65" fill="#8c0c28"/>
<circle cx="436.2" cy="269.7" r="1.65" fill="#8c0c28"/>
<circle cx="451.6" cy="268.0" r="1.65" fill="#8c0c28"/>
<circle cx="467.1" cy="266.3" r="1.65" fill="#8c0c28"/>
<circle cx="478.5" cy="263.4" r="1.65" fill="#8c0c28"/>
<circle cx="489.1" cy="260.3" r="1.65" fill="#8c0c28"/>
<circle cx="499.2" cy="257.0" r="1.65" fill="#8c0c28"/>
<circle cx="506.3" cy="253.3" r="1.65" fill="#8c0c28"/>
<circle cx="513.3" cy="249.7" r="1.65" fill="#8c0c28"/>
<circle cx="518.1" cy="245.8" r="1.65" fill="#8c0c28"/>
<circle cx="522.3" cy="241.9" r="1.65" fill="#8c0c28"/>
<circle cx="524.0" cy="237.8" r="1.65" fill="#8c0c28"/>
<circle cx="525.8" cy="233.8" r="1.65" fill="#8c0c28"/>
<circle cx="527.0" cy="229.8" r="1.65" fill="#8c0c28"/>
<circle cx="527.9" cy="225.7" r="1.65" fill="#8c0c28"/>
<circle cx="528.8" cy="221.7" r="1.65" fill="#8c0c28"/>
<circle cx="529.6" cy="217.6" r="1.65" fill="#8c0c28"/>
<circle cx="530.4" cy="213.6" r="1.65" fill="#8c0c28"/>
<circle cx="530.9" cy="209.6" r="1.65" fill="#8c0c28"/>
<circle cx="531.4" cy="205.5" r="1.65" fill="#8c0c28"/>
<circle cx="531.9" cy="201.5" r="1.65" fill="#8c0c28"/>
<circle cx="532.4" cy="197.4" r="1.65" fill="#8c0c28"/>
<circle cx="532.9" cy="193.4" r="1.65" fill="#8c0c28"/>
<circle cx="533.4" cy="189.3" r="1.65" fill="#8c0c28"/>
<circle cx="533.8" cy="185.3" r="1.65" fill="#8c0c28"/>
<circle cx="534.1" cy="181.2" r="1.65" fill="#8c0c28"/>
<circle cx="534.5" cy="177.2" r="1.65" fill="#8c0c28"/>
<circle cx="535.0" cy="173.1" r="1.65" fill="#8c0c28"/>
<circle cx="535.7" cy="169.1" r="1.65" fill="#8c0c28"/>
<circle cx="536.4" cy="165.1" r="1.65" fill="#8c0c28"/>
<circle cx="537.2" cy="161.0" r="1.65" fill="#8c0c28"/>
<circle cx="539.1" cy="157.0" r="1.65" fill="#8c0c28"/>
<circle cx="547.9" cy="153.8" r="1.65" fill="#8c0c28"/>
<path d="M330.0,275.0 L400.0,272.8 L470.0,265.5 L490.0,258.0 L503.0,249.0 L510.0,238.3 L513.0,230.0 L516.0,216.0 L519.0,196.8 L522.0,174.4 L523.6,165.4 L525.9,158.7 L530.4,152.0 L553.5,149.0" fill="none" stroke="#55b8ee" stroke-width="1.15" stroke-linejoin="round"/>
<circle cx="330.0" cy="275.0" r="1.7" fill="#a8dcf8" stroke="#55b8ee" stroke-width="0.9"/>
<circle cx="357.8" cy="274.1" r="1.7" fill="#a8dcf8" stroke="#55b8ee" stroke-width="0.9"/>
<circle cx="385.5" cy="273.3" r="1.7" fill="#a8dcf8" stroke="#55b8ee" stroke-width="0.9"/>
<circle cx="412.3" cy="271.5" r="1.7" fill="#a8dcf8" stroke="#55b8ee" stroke-width="0.9"/>
<circle cx="437.9" cy="268.8" r="1.7" fill="#a8dcf8" stroke="#55b8ee" stroke-width="0.9"/>
<circle cx="463.6" cy="266.2" r="1.7" fill="#a8dcf8" stroke="#55b8ee" stroke-width="0.9"/>
<circle cx="481.2" cy="261.3" r="1.7" fill="#a8dcf8" stroke="#55b8ee" stroke-width="0.9"/>
<circle cx="493.8" cy="255.4" r="1.7" fill="#a8dcf8" stroke="#55b8ee" stroke-width="0.9"/>
<circle cx="502.9" cy="249.1" r="1.7" fill="#a8dcf8" stroke="#55b8ee" stroke-width="0.9"/>
<circle cx="507.3" cy="242.5" r="1.7" fill="#a8dcf8" stroke="#55b8ee" stroke-width="0.9"/>
<circle cx="510.9" cy="235.9" r="1.7" fill="#a8dcf8" stroke="#55b8ee" stroke-width="0.9"/>
<circle cx="513.2" cy="229.2" r="1.7" fill="#a8dcf8" stroke="#55b8ee" stroke-width="0.9"/>
<circle cx="514.6" cy="222.6" r="1.7" fill="#a8dcf8" stroke="#55b8ee" stroke-width="0.9"/>
<circle cx="516.0" cy="215.9" r="1.7" fill="#a8dcf8" stroke="#55b8ee" stroke-width="0.9"/>
<circle cx="517.1" cy="209.3" r="1.7" fill="#a8dcf8" stroke="#55b8ee" stroke-width="0.9"/>
<circle cx="518.1" cy="202.6" r="1.7" fill="#a8dcf8" stroke="#55b8ee" stroke-width="0.9"/>
<circle cx="519.1" cy="195.9" r="1.7" fill="#a8dcf8" stroke="#55b8ee" stroke-width="0.9"/>
<circle cx="520.0" cy="189.3" r="1.7" fill="#a8dcf8" stroke="#55b8ee" stroke-width="0.9"/>
<circle cx="520.9" cy="182.6" r="1.7" fill="#a8dcf8" stroke="#55b8ee" stroke-width="0.9"/>
<circle cx="521.8" cy="175.9" r="1.7" fill="#a8dcf8" stroke="#55b8ee" stroke-width="0.9"/>
<circle cx="522.9" cy="169.3" r="1.7" fill="#a8dcf8" stroke="#55b8ee" stroke-width="0.9"/>
<circle cx="524.6" cy="162.6" r="1.7" fill="#a8dcf8" stroke="#55b8ee" stroke-width="0.9"/>
<circle cx="527.7" cy="156.0" r="1.7" fill="#a8dcf8" stroke="#55b8ee" stroke-width="0.9"/>
<circle cx="540.0" cy="150.8" r="1.7" fill="#a8dcf8" stroke="#55b8ee" stroke-width="0.9"/>
<path d="M220.0,277.4 L250.0,276.4 L270.0,275.6 L360.0,273.0 L400.0,271.7 L440.0,268.0 L480.0,263.3 L495.0,255.0 L503.5,249.0 L510.9,237.8 L514.7,228.9 L516.9,218.4 L519.1,205.0 L521.4,190.0 L522.1,182.6 L524.4,168.4 L526.2,162.4 L531.1,156.0 L541.6,155.2 L553.5,153.5" fill="none" stroke="#a414d4" stroke-width="1.15" stroke-linejoin="round"/>
<circle cx="220.0" cy="277.4" r="1.65" fill="#a414d4"/>
<circle cx="236.8" cy="276.8" r="1.65" fill="#a414d4"/>
<circle cx="253.7" cy="276.3" r="1.65" fill="#a414d4"/>
<circle cx="270.4" cy="275.6" r="1.65" fill="#a414d4"/>
<circle cx="287.3" cy="275.1" r="1.65" fill="#a414d4"/>
<circle cx="304.2" cy="274.6" r="1.65" fill="#a414d4"/>
<circle cx="321.1" cy="274.1" r="1.65" fill="#a414d4"/>
<circle cx="337.9" cy="273.6" r="1.65" fill="#a414d4"/>
<circle cx="354.8" cy="273.2" r="1.65" fill="#a414d4"/>
<circle cx="371.7" cy="272.6" r="1.65" fill="#a414d4"/>
<circle cx="388.5" cy="272.1" r="1.65" fill="#a414d4"/>
<circle cx="405.0" cy="271.2" r="1.65" fill="#a414d4"/>
<circle cx="420.9" cy="269.8" r="1.65" fill="#a414d4"/>
<circle cx="436.7" cy="268.3" r="1.65" fill="#a414d4"/>
<circle cx="452.1" cy="266.6" r="1.65" fill="#a414d4"/>
<circle cx="467.3" cy="264.8" r="1.65" fill="#a414d4"/>
<circle cx="481.1" cy="262.7" r="1.65" fill="#a414d4"/>
<circle cx="487.9" cy="259.0" r="1.65" fill="#a414d4"/>
<circle cx="494.6" cy="255.2" r="1.65" fill="#a414d4"/>
<circle cx="500.1" cy="251.4" r="1.65" fill="#a414d4"/>
<circle cx="504.5" cy="247.5" r="1.65" fill="#a414d4"/>
<circle cx="507.1" cy="243.5" r="1.65" fill="#a414d4"/>
<circle cx="509.8" cy="239.5" r="1.65" fill="#a414d4"/>
<circle cx="511.9" cy="235.5" r="1.65" fill="#a414d4"/>
<circle cx="513.6" cy="231.5" r="1.65" fill="#a414d4"/>
<circle cx="515.0" cy="227.4" r="1.65" fill="#a414d4"/>
<circle cx="515.9" cy="223.4" r="1.65" fill="#a414d4"/>
<circle cx="516.7" cy="219.4" r="1.65" fill="#a414d4"/>
<circle cx="517.4" cy="215.3" r="1.65" fill="#a414d4"/>
<circle cx="518.1" cy="211.3" r="1.65" fill="#a414d4"/>
<circle cx="518.7" cy="207.2" r="1.65" fill="#a414d4"/>
<circle cx="519.4" cy="203.2" r="1.65" fill="#a414d4"/>
<circle cx="520.0" cy="199.1" r="1.65" fill="#a414d4"/>
<circle cx="520.6" cy="195.1" r="1.65" fill="#a414d4"/>
<circle cx="521.2" cy="191.0" r="1.65" fill="#a414d4"/>
<circle cx="521.7" cy="187.0" r="1.65" fill="#a414d4"/>
<circle cx="522.1" cy="182.9" r="1.65" fill="#a414d4"/>
<circle cx="522.7" cy="178.9" r="1.65" fill="#a414d4"/>
<circle cx="523.4" cy="174.9" r="1.65" fill="#a414d4"/>
<circle cx="524.0" cy="170.8" r="1.65" fill="#a414d4"/>
<circle cx="524.9" cy="166.8" r="1.65" fill="#a414d4"/>
<circle cx="526.1" cy="162.7" r="1.65" fill="#a414d4"/>
<circle cx="529.0" cy="158.7" r="1.65" fill="#a414d4"/>
<circle cx="536.1" cy="155.6" r="1.65" fill="#a414d4"/>
<circle cx="551.2" cy="153.8" r="1.65" fill="#a414d4"/>
</svg>
<div class="yl" style="top:131.4px">1361.6</div><div class="yl" style="top:146.6px">1225.5</div><div class="yl" style="top:161.7px">1089.3</div><div class="yl" style="top:176.8px">953.1</div><div class="yl" style="top:192.0px">817.0</div><div class="yl" style="top:207.2px">680.8</div><div class="yl" style="top:222.3px">544.7</div><div class="yl" style="top:237.5px">408.5</div><div class="yl" style="top:252.6px">272.3</div><div class="yl" style="top:267.8px">136.2</div><div class="yl" style="top:282.9px">0.0</div>
<div class="xl" style="left:131.0px">0.00</div><div class="xl" style="left:171.8px">0.10</div><div class="xl" style="left:212.6px">0.20</div><div class="xl" style="left:253.4px">0.30</div><div class="xl" style="left:294.2px">0.40</div><div class="xl" style="left:335.0px">0.50</div><div class="xl" style="left:375.8px">0.60</div><div class="xl" style="left:416.6px">0.70</div><div class="xl" style="left:457.4px">0.80</div><div class="xl" style="left:498.2px">0.90</div><div class="xl" style="left:539.0px">1.00</div>
<div class="a" style="left:116.4px;top:211.7px;width:0;height:0"><div style="position:absolute;left:-70px;top:-5px;width:140px;text-align:center;transform:rotate(-90deg);font-size:7.7px;line-height:10px;color:#444;white-space:nowrap">Quantity Adsorbed(cm3/g STP)</div></div>
<div class="a" style="left:342.3px;top:301.4px;font-size:7.6px;line-height:9px;color:#444">p/p0</div>
<svg class="a" style="left:0;top:0" width="600" height="401">
<rect x="180.4" y="320.6" width="3.8" height="3.8" fill="#e8a010" stroke="#555" stroke-width="0.7"/>
<rect x="209.9" y="320.6" width="3.8" height="3.8" fill="#f8f8f8" stroke="#777" stroke-width="0.7"/>
<rect x="221.2" y="320.6" width="3.8" height="3.8" fill="#55b8ee" stroke="#555" stroke-width="0.7"/>
<rect x="250.7" y="320.6" width="3.8" height="3.8" fill="#f8f8f8" stroke="#777" stroke-width="0.7"/>
<rect x="262.9" y="320.6" width="3.8" height="3.8" fill="#8c0c28" stroke="#555" stroke-width="0.7"/>
<rect x="292.4" y="320.6" width="3.8" height="3.8" fill="#8c0c28" stroke="#555" stroke-width="0.7"/>
<rect x="303.7" y="320.6" width="3.8" height="3.8" fill="#a414d4" stroke="#555" stroke-width="0.7"/>
<rect x="333.2" y="320.6" width="3.8" height="3.8" fill="#a414d4" stroke="#555" stroke-width="0.7"/>
<rect x="344.9" y="320.6" width="3.8" height="3.8" fill="#9dc41c" stroke="#555" stroke-width="0.7"/>
<rect x="374.4" y="320.6" width="3.8" height="3.8" fill="#f8f8f8" stroke="#777" stroke-width="0.7"/>
<rect x="385.6" y="320.6" width="3.8" height="3.8" fill="#2fbb2f" stroke="#555" stroke-width="0.7"/>
<rect x="415.1" y="320.6" width="3.8" height="3.8" fill="#f8f8f8" stroke="#777" stroke-width="0.7"/>
<rect x="428.3" y="320.6" width="3.8" height="3.8" fill="#3cc8cc" stroke="#555" stroke-width="0.7"/>
<rect x="457.8" y="320.6" width="3.8" height="3.8" fill="#3cc8cc" stroke="#555" stroke-width="0.7"/>
<rect x="468.4" y="320.6" width="3.8" height="3.8" fill="#f0a818" stroke="#555" stroke-width="0.7"/>
<rect x="497.9" y="320.6" width="3.8" height="3.8" fill="#f0a818" stroke="#555" stroke-width="0.7"/>
</svg><div class="lt" style="left:186.5px">Ads1</div><div class="lt" style="left:227.3px">Des1</div><div class="lt" style="left:269.0px">Ads2</div><div class="lt" style="left:309.8px">Des2</div><div class="lt" style="left:351.0px">Ads3</div><div class="lt" style="left:391.7px">Des3</div><div class="lt" style="left:434.4px">Ads4</div><div class="lt" style="left:474.5px">Des4</div>
<!-- status row -->
<div class="a" style="left:106px;top:342px;width:460px;height:16.7px;background:#fff"></div>
<div class="a" style="left:112px;top:346.2px;width:13.8px;height:8.3px;background:#f4f4f4;border:0.8px solid #c8c8c8;border-radius:1px"></div>
<div class="a" style="left:116.4px;top:348px;width:0.8px;height:5px;background:#d6d6d6"></div>
<div class="a" style="left:118.4px;top:348.4px;width:5.4px;height:4.2px;background:#e4e4e4"></div>
<div class="a" style="left:129.2px;top:346.8px;font-size:6.6px;line-height:8px;color:#222;white-space:nowrap">Analysis1:ManualCtrl::vacuumizeProc:Start vac</div>
<div class="abox" style="left:376.7px;width:44.6px">Analysis1</div>
<div class="abar" style="left:376.7px;width:44.6px"></div>
<div class="abox" style="left:423px;width:44.6px">Analysis2</div>
<div class="abar" style="left:423px;width:44.6px"></div>
<div class="abox" style="left:469.6px;width:44.8px">Analysis3</div>
<div class="abar" style="left:469.6px;width:44.8px"></div>
<div class="abox" style="left:516.4px;width:44.6px">Analysis4</div>
<div class="abar" style="left:516.4px;width:44.6px"></div>
<!-- footer -->
<div class="a" style="left:100px;top:372.8px;font-size:8.75px;line-height:10px;color:#222;white-space:nowrap">Synchronized Pore Analysis System</div>
<div class="a" style="left:399px;top:374px;font-size:6.7px;line-height:8px;color:#222;white-space:nowrap">Beijing JWGB Sci &amp; Tech Inc.</div>
<div class="a" style="left:497px;top:374px;font-size:6.86px;line-height:8px;color:#222;white-space:nowrap">2020/03/28 18:17</div>
</body></html>
